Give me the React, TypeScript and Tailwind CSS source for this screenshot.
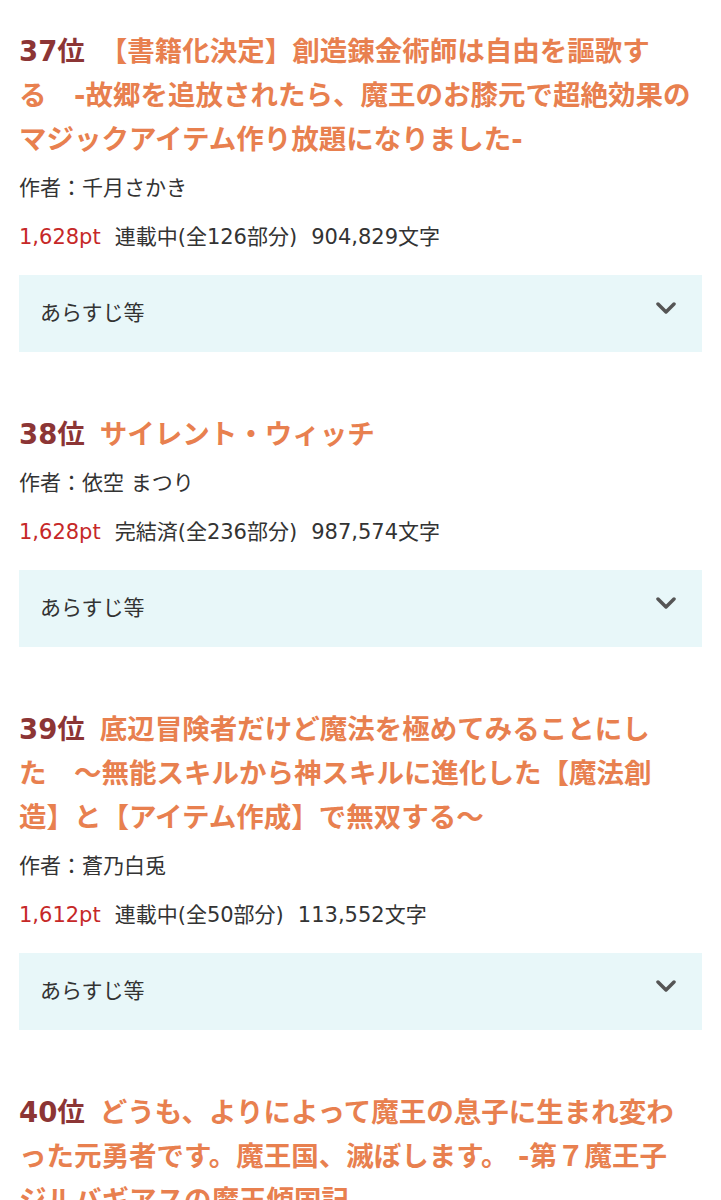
import { Fragment } from 'react';

interface Novel {
    rank: number;
    // 参照画面の改行位置に合わせて行ごとに分割
    titleLines: string[];
    author: string;
    pt: string;
    status: string;
    chars: string;
}

const novels: Novel[] = [
    {
        rank: 37,
        titleLines: [
            '【書籍化決定】創造錬金術師は自由を謳歌す',
            'る　-故郷を追放されたら、魔王のお膝元で超絶効果の',
            'マジックアイテム作り放題になりました-',
        ],
        author: '千月さかき',
        pt: '1,628pt',
        status: '連載中(全126部分)',
        chars: '904,829文字',
    },
    {
        rank: 38,
        titleLines: ['サイレント・ウィッチ'],
        author: '依空 まつり',
        pt: '1,628pt',
        status: '完結済(全236部分)',
        chars: '987,574文字',
    },
    {
        rank: 39,
        titleLines: [
            '底辺冒険者だけど魔法を極めてみることにし',
            'た　～無能スキルから神スキルに進化した【魔法創',
            '造】と【アイテム作成】で無双する～',
        ],
        author: '蒼乃白兎',
        pt: '1,612pt',
        status: '連載中(全50部分)',
        chars: '113,552文字',
    },
    {
        rank: 40,
        titleLines: [
            'どうも、よりによって魔王の息子に生まれ変わ',
            'った元勇者です。魔王国、滅ぼします。 -第７魔王子',
            'ジルバギアスの魔王傾国記-',
        ],
        author: '甘木智彬',
        pt: '1,598pt',
        status: '連載中(全180部分)',
        chars: '912,388文字',
    },
];

function Chevron() {
    return (
        <svg width="20" height="12" viewBox="0 0 20 12" className="-mt-[11px]">
            <path d="M2 2 L10 10 L18 2" fill="none" stroke="#555" strokeWidth="3.5" strokeLinecap="round" strokeLinejoin="round" />
        </svg>
    );
}

function RankingItem({ novel }: { novel: Novel }) {
    return (
        <div className="mb-[60px]">
            {/* タイトル */}
            <h2 className="whitespace-nowrap text-[27.5px] font-bold leading-[44px] text-[#e8804f]">
                <span className="mr-[15px] text-[#8c3535]">{novel.rank}位</span>
                {novel.titleLines.map((line, i) => (
                    <Fragment key={i}>
                        {i > 0 && <br />}
                        {line}
                    </Fragment>
                ))}
            </h2>

            {/* 作者・情報 */}
            <div className="mt-[10px] text-[21px] leading-[35px] text-[#333]">作者：{novel.author}</div>
            <div className="mt-[14px] flex gap-[14px] text-[21px] leading-[35px] text-[#333]">
                <span className="text-[#c62828]">{novel.pt}</span>
                <span>{novel.status}</span>
                <span>{novel.chars}</span>
            </div>

            {/* あらすじ */}
            <button className="mt-[20px] flex h-[77px] w-full items-center justify-between bg-[#e8f7f9] pl-[21px] pr-[26px] text-left">
                <span className="text-[21px] text-[#333]">あらすじ等</span>
                <Chevron />
            </button>
        </div>
    );
}

export default function App() {
    return (
        <div
            className="h-[1200px] w-full overflow-hidden bg-white px-[19px] pt-[29px]"
            style={{ fontFamily: '"DejaVu Sans", "Noto Sans CJK JP", sans-serif' }}
        >
            {novels.map((n) => (
                <RankingItem key={n.rank} novel={n} />
            ))}
        </div>
    );
}
